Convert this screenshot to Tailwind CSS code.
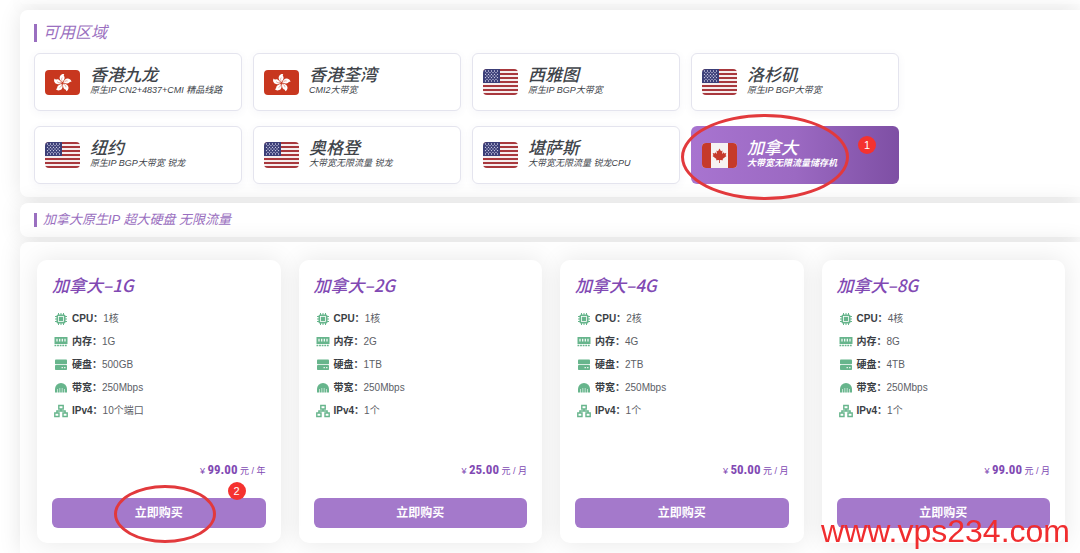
<!DOCTYPE html>
<html lang="zh-CN">

<head>
  <title>加拿大原生IP 超大硬盘 无限流量</title>
  <meta charset="UTF-8" />
  <meta name="viewport" content="width=device-width, initial-scale=1.0" />
  <script src="https://cdn.jsdelivr.net/npm/@tailwindcss/browser@4"></script>
</head>

<body class="overflow-x-hidden bg-white font-['Liberation_Sans','Noto_Sans_CJK_SC',sans-serif] text-[#40444a]">
  <!-- flags and spec icons -->
  <svg class="absolute size-0">
    <symbol id="flag-hk" viewBox="0 0 35 25">
      <rect width="35" height="25" rx="4" fill="#c8371f" />
      <g fill="#fff" transform="translate(17.5 13)">
        <path id="petal" d="M0 -.8C-2.2 -2.2 -3.8 -4.800 -2.2 -7.200C-1.200 -8.800 .6 -9.300 1.800 -8.800C1 -8 1.200 -7.300 1.900 -6.300C2.700 -4.600 1.200 -2.600 0 -.8Z" />
        <use href="#petal" transform="rotate(72)" />
        <use href="#petal" transform="rotate(144)" />
        <use href="#petal" transform="rotate(216)" />
        <use href="#petal" transform="rotate(288)" />
      </g>
      <g fill="none" stroke="#c8371f" stroke-width=".4" transform="translate(17.5 13)">
        <path id="vein" d="M0 -1.500C-1 -3 -1.200 -4 -.3 -5.500" />
        <use href="#vein" transform="rotate(72)" />
        <use href="#vein" transform="rotate(144)" />
        <use href="#vein" transform="rotate(216)" />
        <use href="#vein" transform="rotate(288)" />
      </g>
    </symbol>
    <symbol id="flag-us" viewBox="0 0 35 26">
      <clipPath id="us-clip"><rect width="35" height="26" rx="4" /></clipPath>
      <g clip-path="url(#us-clip)">
        <rect width="35" height="26" fill="#f6eeee" />
        <path d="M0 1H35M0 5H35M0 9H35M0 13H35M0 17H35M0 21H35M0 25H35" stroke="#a8383d" stroke-width="2" />
        <rect width="17" height="14" fill="#3c3f78" />
        <g stroke="#dcdcf0" stroke-width="1.300" stroke-linecap="round" stroke-dasharray="0 3">
          <path d="M2.500 2H16M2.500 5.300H16M2.500 8.600H16M2.500 12H16" />
          <path d="M4 3.600H15M4 7H15M4 10.300H15" />
        </g>
      </g>
    </symbol>
    <symbol id="flag-ca" viewBox="0 0 35 25">
      <clipPath id="ca-clip"><rect width="35" height="25" rx="4" /></clipPath>
      <g clip-path="url(#ca-clip)" fill="#c63a2b">
        <rect width="35" height="25" fill="#f6f2f2" />
        <path d="M0 0H9V25H0ZM26 0H35V25H26Z" />
        <path d="M17.500 5.500L19 8.300L20.500 7.500L20 11L21.800 9.300L22.200 10.400L24.300 10L23.600 12.200L24.500 12.900L20.600 16L21 17.300L17.900 16.900V20H17.100V16.900L14 17.300L14.400 16L10.500 12.900L11.400 12.200L10.700 10L12.800 10.400L13.200 9.300L15 11L14.500 7.500L16 8.300Z" />
      </g>
    </symbol>
    <symbol id="icon-cpu" viewBox="0 0 14 14">
      <path d="M4.500 1V13M7 1V13M9.500 1V13M1 4.500H13M1 7H13M1 9.500H13" stroke="currentColor" />
      <rect x="2.500" y="2.500" width="9" height="9" rx="1.500" fill="currentColor" />
      <rect x="4.500" y="4.500" width="5" height="5" fill="none" stroke="#fff" stroke-width=".8" />
    </symbol>
    <symbol id="icon-ram" viewBox="0 0 14 14">
      <path d="M.5 2H13.500V9H.5Z" fill="currentColor" />
      <path d="M3 3.800V6.500M5.700 3.800V6.500M8.300 3.800V6.500M11 3.800V6.500" stroke="#fff" stroke-width="1.200" />
      <path d="M.5 10.500H13.500" stroke="currentColor" stroke-width="1.600" stroke-dasharray="1.800 .8" />
    </symbol>
    <symbol id="icon-disk" viewBox="0 0 14 14">
      <rect x="1" y="1.500" width="12" height="4.800" rx=".8" fill="currentColor" />
      <rect x="1" y="7" width="12" height="5" rx=".8" fill="currentColor" />
      <path d="M7.500 9.700H9M10 9.700H11.500" stroke="#fff" />
    </symbol>
    <symbol id="icon-net" viewBox="0 0 14 14">
      <path d="M1 11.500V8A6 6 0 0 1 13 8V11.500Z" fill="currentColor" />
      <path d="M3.500 8V12M5.800 7V12M8.200 7V12M10.500 8V12" stroke="#fff" stroke-width=".6" />
    </symbol>
    <symbol id="icon-ip" viewBox="0 0 14 14">
      <path d="M4.800 1.500H9.200V5H4.800ZM.8 9H5V12.500H.8ZM9 9H13.200V12.500H9ZM7 5V7M2.900 9V7H11.100V9" fill="none" stroke="currentColor" stroke-width="1.400" />
    </symbol>
  </svg>

  <main class="flex flex-col gap-[6px] pl-5">
    <div class="h-1 rounded-bl-lg bg-white shadow-[0_0_22px_rgba(0,0,0,0.1)]"></div>

    <!-- regions -->
    <section class="rounded-l-lg bg-white pt-[14px] pb-[13px] pl-[14px] shadow-[0_0_22px_rgba(0,0,0,0.1)]">
      <h2 class="mb-[11px] flex h-[18px] items-center border-l-3 border-[#9a6fc0] pl-[6px] text-[16px] italic text-[#9a6fc0]">可用区域</h2>
      <div class="grid max-w-[865px] grid-cols-4 gap-x-[11px] gap-y-[15px]">
        <button class="flex h-[58px] items-center gap-[10px] rounded-md border border-[#e4e4ee] bg-white pl-[10px] text-left italic shadow-[0_2px_8px_rgba(80,80,140,0.06)]">
          <svg class="h-[25px] w-[35px]"><use href="#flag-hk" /></svg>
          <span>
            <span class="block text-[17px] leading-[17px] font-medium">香港九龙</span>
            <span class="block text-[9px] leading-[13px] whitespace-nowrap">原生IP CN2+4837+CMI 精品线路</span>
          </span>
        </button>
        <button class="flex h-[58px] items-center gap-[10px] rounded-md border border-[#e4e4ee] bg-white pl-[10px] text-left italic shadow-[0_2px_8px_rgba(80,80,140,0.06)]">
          <svg class="h-[25px] w-[35px]"><use href="#flag-hk" /></svg>
          <span>
            <span class="block text-[17px] leading-[17px] font-medium">香港荃湾</span>
            <span class="block text-[9px] leading-[13px] whitespace-nowrap">CMI2大带宽</span>
          </span>
        </button>
        <button class="flex h-[58px] items-center gap-[10px] rounded-md border border-[#e4e4ee] bg-white pl-[10px] text-left italic shadow-[0_2px_8px_rgba(80,80,140,0.06)]">
          <svg class="h-[26px] w-[35px]"><use href="#flag-us" /></svg>
          <span>
            <span class="block text-[17px] leading-[17px] font-medium">西雅图</span>
            <span class="block text-[9px] leading-[13px] whitespace-nowrap">原生IP BGP大带宽</span>
          </span>
        </button>
        <button class="flex h-[58px] items-center gap-[10px] rounded-md border border-[#e4e4ee] bg-white pl-[10px] text-left italic shadow-[0_2px_8px_rgba(80,80,140,0.06)]">
          <svg class="h-[26px] w-[35px]"><use href="#flag-us" /></svg>
          <span>
            <span class="block text-[17px] leading-[17px] font-medium">洛杉矶</span>
            <span class="block text-[9px] leading-[13px] whitespace-nowrap">原生IP BGP大带宽</span>
          </span>
        </button>
        <button class="flex h-[58px] items-center gap-[10px] rounded-md border border-[#e4e4ee] bg-white pl-[10px] text-left italic shadow-[0_2px_8px_rgba(80,80,140,0.06)]">
          <svg class="h-[26px] w-[35px]"><use href="#flag-us" /></svg>
          <span>
            <span class="block text-[17px] leading-[17px] font-medium">纽约</span>
            <span class="block text-[9px] leading-[13px] whitespace-nowrap">原生IP BGP大带宽 锐龙</span>
          </span>
        </button>
        <button class="flex h-[58px] items-center gap-[10px] rounded-md border border-[#e4e4ee] bg-white pl-[10px] text-left italic shadow-[0_2px_8px_rgba(80,80,140,0.06)]">
          <svg class="h-[26px] w-[35px]"><use href="#flag-us" /></svg>
          <span>
            <span class="block text-[17px] leading-[17px] font-medium">奥格登</span>
            <span class="block text-[9px] leading-[13px] whitespace-nowrap">大带宽无限流量 锐龙</span>
          </span>
        </button>
        <button class="flex h-[58px] items-center gap-[10px] rounded-md border border-[#e4e4ee] bg-white pl-[10px] text-left italic shadow-[0_2px_8px_rgba(80,80,140,0.06)]">
          <svg class="h-[26px] w-[35px]"><use href="#flag-us" /></svg>
          <span>
            <span class="block text-[17px] leading-[17px] font-medium">堪萨斯</span>
            <span class="block text-[9px] leading-[13px] whitespace-nowrap">大带宽无限流量 锐龙CPU</span>
          </span>
        </button>
        <!-- selected -->
        <div class="relative">
          <button class="flex h-[58px] w-full items-center gap-[10px] rounded-md bg-linear-to-r from-[#a874d0] via-[#9b69c2] to-[#7e4fa4] pl-[11px] text-left italic text-white">
            <svg class="h-[25px] w-[35px]"><use href="#flag-ca" /></svg>
            <span>
              <span class="block text-[17px] leading-[17px] font-medium">加拿大</span>
              <span class="block text-[9px] leading-[13px] font-bold whitespace-nowrap">大带宽无限流量储存机</span>
            </span>
          </button>
          <div class="pointer-events-none absolute -top-3 -left-[10px] z-10 h-[86px] w-[168px] rounded-[50%] border-3 border-[#e2393c]"></div>
          <span class="absolute top-[10px] right-[23px] flex size-[18px] items-center justify-center rounded-full bg-[#f5322f] text-[11px] text-white">1</span>
        </div>
      </div>
    </section>

    <section class="rounded-l-lg bg-white py-[10px] pl-[14px] shadow-[0_0_22px_rgba(0,0,0,0.1)]">
      <h2 class="flex h-[14px] items-center border-l-3 border-[#9a6fc0] pl-[6px] text-[13px] italic text-[#9a6fc0]">加拿大原生IP 超大硬盘 无限流量</h2>
    </section>

    <!-- plans -->
    <section class="-mt-px grid grid-cols-4 gap-[18px] rounded-tl-lg bg-[#fefefe] pt-[18px] pr-[15px] pb-[10px] pl-[17px] shadow-[0_0_22px_rgba(0,0,0,0.1)]">
      <article class="relative rounded-[10px] bg-white px-[15px] pt-[13px] pb-[15px] shadow-[0_0_24px_rgba(0,0,0,0.09)]">
        <h3 class="mb-[10px] font-['Noto_Sans_CJK_SC',sans-serif] text-[17px] leading-[24px] font-medium italic text-[#8149b3]">加拿大–1G</h3>
        <ul class="pl-[2px] text-[10px] leading-[23px] text-[#5c6066]">
          <li class="flex items-center"><svg class="mr-1 size-[14px] text-[#67b58c]"><use href="#icon-cpu" /></svg><b class="text-[#3a3e44]">CPU：</b>1核</li>
          <li class="flex items-center"><svg class="mr-1 size-[14px] text-[#67b58c]"><use href="#icon-ram" /></svg><b class="text-[#3a3e44]">内存：</b>1G</li>
          <li class="flex items-center"><svg class="mr-1 size-[14px] text-[#67b58c]"><use href="#icon-disk" /></svg><b class="text-[#3a3e44]">硬盘：</b>500GB</li>
          <li class="flex items-center"><svg class="mr-1 size-[14px] text-[#67b58c]"><use href="#icon-net" /></svg><b class="text-[#3a3e44]">带宽：</b>250Mbps</li>
          <li class="flex items-center"><svg class="mr-1 size-[14px] text-[#67b58c]"><use href="#icon-ip" /></svg><b class="text-[#3a3e44]">IPv4：</b>10个端口</li>
        </ul>
        <p class="mt-[38px] mb-[17px] text-right text-[9px] leading-[20px] text-[#8149b3]">¥ <span class="font-['Roboto_Condensed','Liberation_Sans_Narrow','Liberation_Sans'] text-[13px] font-bold">99.00</span> 元 / 年</p>
        <button class="h-[30px] w-full rounded-md bg-[#a479cb] text-[12px] font-bold text-white">立即购买</button>
        <div class="pointer-events-none absolute bottom-0 left-[77px] h-[58px] w-[102px] rounded-[50%] border-3 border-[#e2393c]"></div>
        <span class="absolute right-[35px] bottom-[43px] flex size-[18px] items-center justify-center rounded-full bg-[#f5322f] text-[11px] text-white">2</span>
      </article>

      <article class="rounded-[10px] bg-white px-[15px] pt-[13px] pb-[15px] shadow-[0_0_24px_rgba(0,0,0,0.09)]">
        <h3 class="mb-[10px] font-['Noto_Sans_CJK_SC',sans-serif] text-[17px] leading-[24px] font-medium italic text-[#8149b3]">加拿大–2G</h3>
        <ul class="pl-[2px] text-[10px] leading-[23px] text-[#5c6066]">
          <li class="flex items-center"><svg class="mr-1 size-[14px] text-[#67b58c]"><use href="#icon-cpu" /></svg><b class="text-[#3a3e44]">CPU：</b>1核</li>
          <li class="flex items-center"><svg class="mr-1 size-[14px] text-[#67b58c]"><use href="#icon-ram" /></svg><b class="text-[#3a3e44]">内存：</b>2G</li>
          <li class="flex items-center"><svg class="mr-1 size-[14px] text-[#67b58c]"><use href="#icon-disk" /></svg><b class="text-[#3a3e44]">硬盘：</b>1TB</li>
          <li class="flex items-center"><svg class="mr-1 size-[14px] text-[#67b58c]"><use href="#icon-net" /></svg><b class="text-[#3a3e44]">带宽：</b>250Mbps</li>
          <li class="flex items-center"><svg class="mr-1 size-[14px] text-[#67b58c]"><use href="#icon-ip" /></svg><b class="text-[#3a3e44]">IPv4：</b>1个</li>
        </ul>
        <p class="mt-[38px] mb-[17px] text-right text-[9px] leading-[20px] text-[#8149b3]">¥ <span class="font-['Roboto_Condensed','Liberation_Sans_Narrow','Liberation_Sans'] text-[13px] font-bold">25.00</span> 元 / 月</p>
        <button class="h-[30px] w-full rounded-md bg-[#a479cb] text-[12px] font-bold text-white">立即购买</button>
      </article>

      <article class="rounded-[10px] bg-white px-[15px] pt-[13px] pb-[15px] shadow-[0_0_24px_rgba(0,0,0,0.09)]">
        <h3 class="mb-[10px] font-['Noto_Sans_CJK_SC',sans-serif] text-[17px] leading-[24px] font-medium italic text-[#8149b3]">加拿大–4G</h3>
        <ul class="pl-[2px] text-[10px] leading-[23px] text-[#5c6066]">
          <li class="flex items-center"><svg class="mr-1 size-[14px] text-[#67b58c]"><use href="#icon-cpu" /></svg><b class="text-[#3a3e44]">CPU：</b>2核</li>
          <li class="flex items-center"><svg class="mr-1 size-[14px] text-[#67b58c]"><use href="#icon-ram" /></svg><b class="text-[#3a3e44]">内存：</b>4G</li>
          <li class="flex items-center"><svg class="mr-1 size-[14px] text-[#67b58c]"><use href="#icon-disk" /></svg><b class="text-[#3a3e44]">硬盘：</b>2TB</li>
          <li class="flex items-center"><svg class="mr-1 size-[14px] text-[#67b58c]"><use href="#icon-net" /></svg><b class="text-[#3a3e44]">带宽：</b>250Mbps</li>
          <li class="flex items-center"><svg class="mr-1 size-[14px] text-[#67b58c]"><use href="#icon-ip" /></svg><b class="text-[#3a3e44]">IPv4：</b>1个</li>
        </ul>
        <p class="mt-[38px] mb-[17px] text-right text-[9px] leading-[20px] text-[#8149b3]">¥ <span class="font-['Roboto_Condensed','Liberation_Sans_Narrow','Liberation_Sans'] text-[13px] font-bold">50.00</span> 元 / 月</p>
        <button class="h-[30px] w-full rounded-md bg-[#a479cb] text-[12px] font-bold text-white">立即购买</button>
      </article>

      <article class="rounded-[10px] bg-white px-[15px] pt-[13px] pb-[15px] shadow-[0_0_24px_rgba(0,0,0,0.09)]">
        <h3 class="mb-[10px] font-['Noto_Sans_CJK_SC',sans-serif] text-[17px] leading-[24px] font-medium italic text-[#8149b3]">加拿大–8G</h3>
        <ul class="pl-[2px] text-[10px] leading-[23px] text-[#5c6066]">
          <li class="flex items-center"><svg class="mr-1 size-[14px] text-[#67b58c]"><use href="#icon-cpu" /></svg><b class="text-[#3a3e44]">CPU：</b>4核</li>
          <li class="flex items-center"><svg class="mr-1 size-[14px] text-[#67b58c]"><use href="#icon-ram" /></svg><b class="text-[#3a3e44]">内存：</b>8G</li>
          <li class="flex items-center"><svg class="mr-1 size-[14px] text-[#67b58c]"><use href="#icon-disk" /></svg><b class="text-[#3a3e44]">硬盘：</b>4TB</li>
          <li class="flex items-center"><svg class="mr-1 size-[14px] text-[#67b58c]"><use href="#icon-net" /></svg><b class="text-[#3a3e44]">带宽：</b>250Mbps</li>
          <li class="flex items-center"><svg class="mr-1 size-[14px] text-[#67b58c]"><use href="#icon-ip" /></svg><b class="text-[#3a3e44]">IPv4：</b>1个</li>
        </ul>
        <p class="mt-[38px] mb-[17px] text-right text-[9px] leading-[20px] text-[#8149b3]">¥ <span class="font-['Roboto_Condensed','Liberation_Sans_Narrow','Liberation_Sans'] text-[13px] font-bold">99.00</span> 元 / 月</p>
        <button class="h-[30px] w-full rounded-md bg-[#a479cb] text-[12px] font-bold text-white">立即购买</button>
      </article>
    </section>
  </main>

  <!-- watermark -->
  <div class="pointer-events-none fixed right-[10px] bottom-1 text-[32px] leading-[36px] text-[#f02d2f]">www.vps234.com</div>
</body>

</html>
